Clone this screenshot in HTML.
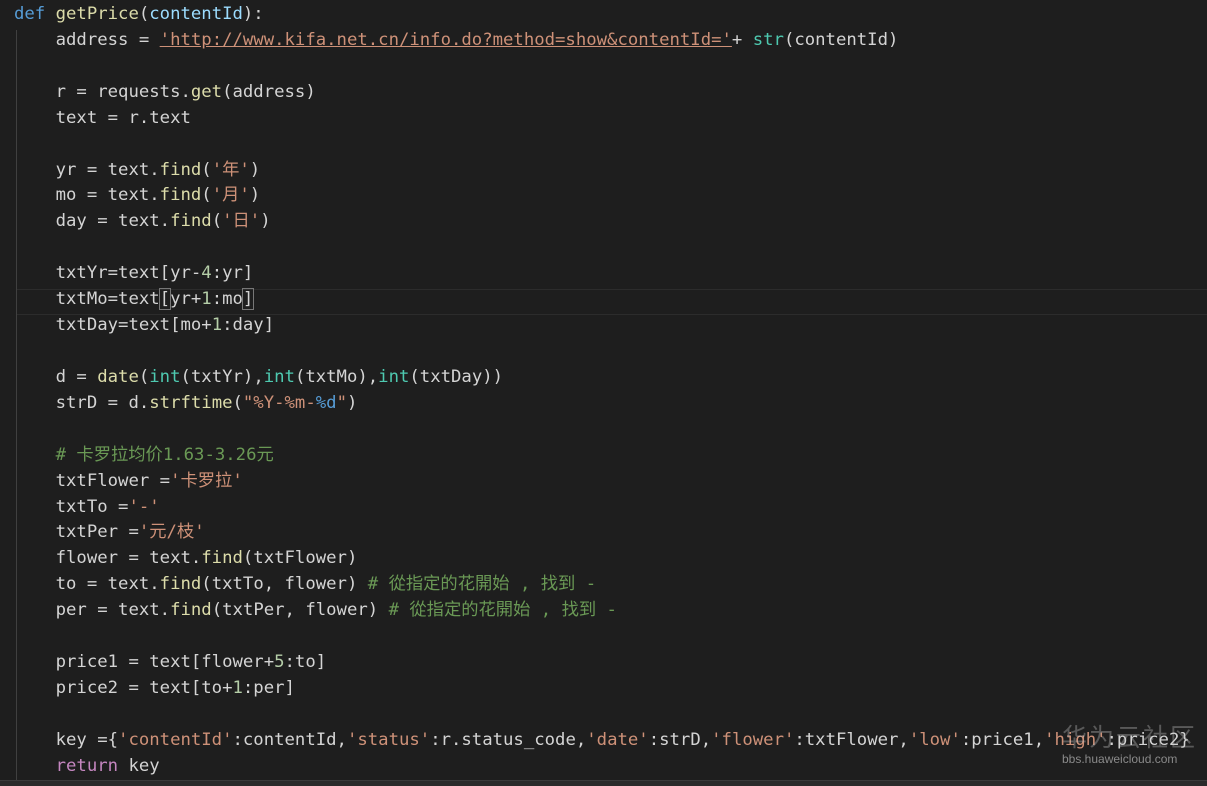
<!DOCTYPE html>
<html><head><meta charset="utf-8"><style>
html,body{margin:0;padding:0;background:#1e1e1e;width:1207px;height:785px;overflow:hidden}
#ed{position:absolute;left:0;top:2px;font-family:"DejaVu Sans Mono","Noto Sans CJK SC",monospace;font-size:17.3px;color:#d4d4d4}
.l{height:25.93px;line-height:25.93px;padding-left:14px;position:relative;white-space:pre}
.k{color:#569cd6}.f{color:#dcdcaa}.p{color:#9cdcfe}.s{color:#ce9178}.c{color:#6a9955}.t{color:#4ec9b0}.n{color:#b5cea8}
.u{text-decoration:underline;text-decoration-color:#ce9178}
.cur{position:absolute;left:16px;right:0;top:289px;height:24px;border-top:1px solid #2c2c2c;border-bottom:1px solid #2c2c2c}
.guide{position:absolute;left:16px;top:30px;width:1px;height:755px;background:#404040}
.br{outline:1px solid #777}
.wm1{position:absolute;left:1062px;top:718px;font-family:"Noto Sans CJK SC",sans-serif;font-size:25px;color:rgba(200,200,200,.35);letter-spacing:2px}
.wm2{position:absolute;left:1062px;top:752px;font-family:"Liberation Sans",sans-serif;font-size:12px;color:#8a8a8a}
.bot{position:absolute;left:0;right:0;top:780px;height:5px;background:#2a2a2a;border-top:1px solid #3a3a3a}
</style></head><body>
<div class="cur"></div>
<div class="guide"></div>
<div id="ed"><div class="l"><span class="k">def</span> <span class="f">getPrice</span>(<span class="p">contentId</span>):</div><div class="l">    address = <span class="s u">'http://www.kifa.net.cn/info.do?method=show&amp;contentId='</span>+ <span class="t">str</span>(contentId)</div><div class="l"> </div><div class="l">    r = requests.<span class="f">get</span>(address)</div><div class="l">    text = r.text</div><div class="l"> </div><div class="l">    yr = text.<span class="f">find</span>(<span class="s">'年'</span>)</div><div class="l">    mo = text.<span class="f">find</span>(<span class="s">'月'</span>)</div><div class="l">    day = text.<span class="f">find</span>(<span class="s">'日'</span>)</div><div class="l"> </div><div class="l">    txtYr=text[yr-<span class="n">4</span>:yr]</div><div class="l">    txtMo=text<span class="br">[</span>yr+<span class="n">1</span>:mo<span class="br">]</span></div><div class="l">    txtDay=text[mo+<span class="n">1</span>:day]</div><div class="l"> </div><div class="l">    d = <span class="f">date</span>(<span class="t">int</span>(txtYr),<span class="t">int</span>(txtMo),<span class="t">int</span>(txtDay))</div><div class="l">    strD = d.<span class="f">strftime</span>(<span class="s">"%Y-%m-</span><span class="k">%d</span><span class="s">"</span>)</div><div class="l"> </div><div class="l">    <span class="c"># 卡罗拉均价1.63-3.26元</span></div><div class="l">    txtFlower =<span class="s">'卡罗拉'</span></div><div class="l">    txtTo =<span class="s">'-'</span></div><div class="l">    txtPer =<span class="s">'元/枝'</span></div><div class="l">    flower = text.<span class="f">find</span>(txtFlower)</div><div class="l">    to = text.<span class="f">find</span>(txtTo, flower) <span class="c"># 從指定的花開始 , 找到 -</span></div><div class="l">    per = text.<span class="f">find</span>(txtPer, flower) <span class="c"># 從指定的花開始 , 找到 -</span></div><div class="l"> </div><div class="l">    price1 = text[flower+<span class="n">5</span>:to]</div><div class="l">    price2 = text[to+<span class="n">1</span>:per]</div><div class="l"> </div><div class="l">    key ={<span class="s">'contentId'</span>:contentId,<span class="s">'status'</span>:r.status_code,<span class="s">'date'</span>:strD,<span class="s">'flower'</span>:txtFlower,<span class="s">'low'</span>:price1,<span class="s">'high'</span>:price2}</div><div class="l">    <span style="color:#c586c0">return</span> key</div></div>
<div class="wm1">华为云社区</div>
<div class="wm2">bbs.huaweicloud.com</div>
<div class="bot"></div>
</body></html>
